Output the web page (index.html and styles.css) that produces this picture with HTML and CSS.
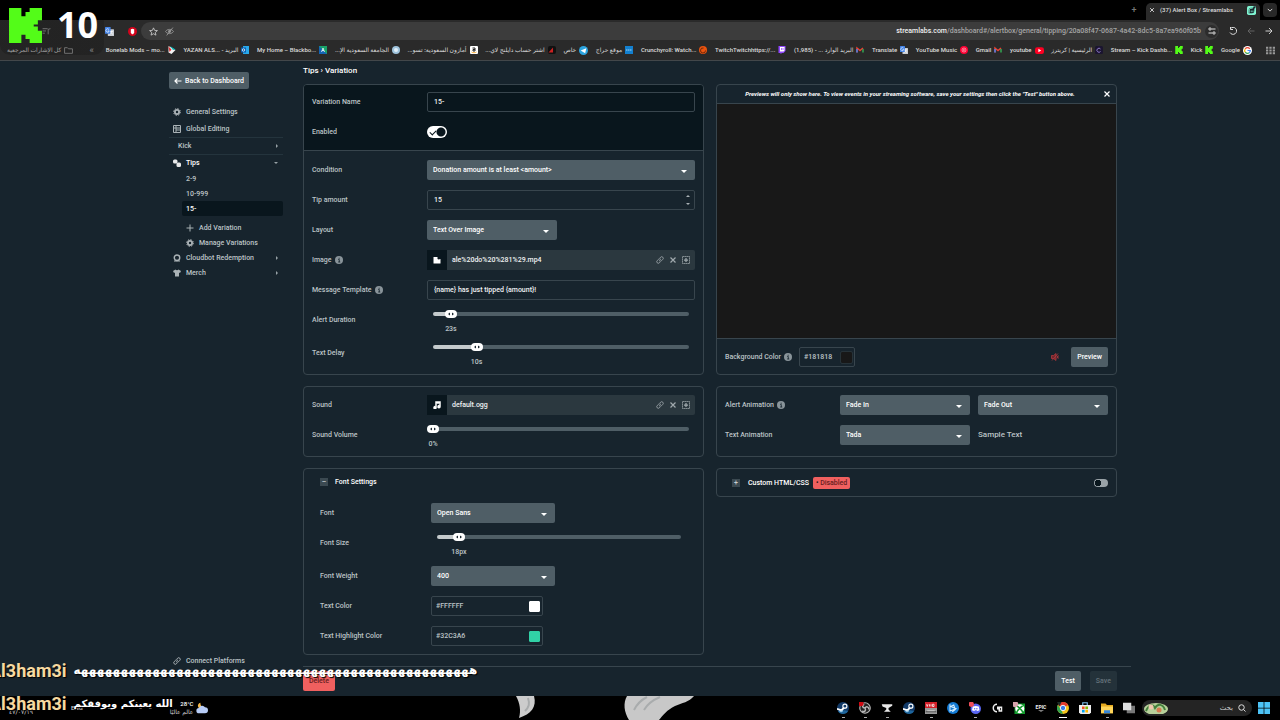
FILE: index.html
```html
<!DOCTYPE html>
<html lang="en">
<head>
<meta charset="utf-8">
<title>Alert Box / Streamlabs</title>
<link rel="stylesheet" href="styles.css">
</head>
<body>
<svg class="defs" aria-hidden="true">
  <symbol id="gear" viewBox="0 0 16 16"><circle cx="8" cy="8" r="4.2" fill="none" stroke="currentColor" stroke-width="3.6"/><circle cx="8" cy="8" r="6.8" fill="none" stroke="currentColor" stroke-width="2" stroke-dasharray="2.7 2.64"/></symbol>
  <symbol id="link" viewBox="0 0 16 16"><g fill="none" stroke="currentColor" stroke-width="1.7" stroke-linecap="round"><path d="M6.5 9.5a3 3 0 0 0 4.3 0l2.800-2.800a3 3 0 0 0-4.300-4.300L8 3.700"/><path d="M9.500 6.500a3 3 0 0 0-4.300 0L2.400 9.300a3 3 0 0 0 4.300 4.300L8 12.300"/></g></symbol>
  <symbol id="cross" viewBox="0 0 16 16"><path d="M3 3l10 10M13 3L3 13" fill="none" stroke="currentColor" stroke-width="2.4"/></symbol>
  <symbol id="media" viewBox="0 0 16 16"><rect x="1" y="1" width="14" height="14" fill="none" stroke="currentColor" stroke-width="2" stroke-dasharray="2.5 1.500"/><path d="M8 4v8M4 8h8" stroke="currentColor" stroke-width="2.500"/></symbol>
  <symbol id="info" viewBox="0 0 16 16"><circle cx="8" cy="8" r="8" fill="currentColor"/><path d="M6.500 7H8.500v5M6.500 12h4M8.300 3.500v2" stroke="#17242d" stroke-width="1.800" fill="none"/></symbol>
  <symbol id="kick" viewBox="0 0 16 17"><path fill="#53fc18" d="M0 0h6v4h2V2h2V0h6v6h-2v2h-2v1h2v2h2v6h-6v-2H8v-2H6v4H0z"/></symbol>
  <symbol id="gmail" viewBox="0 0 16 16"><path d="M2 13V4l6 5 6-5" fill="none" stroke="#ea4335" stroke-width="3"/><path d="M2 13V6" stroke="#4285f4" stroke-width="3"/><path d="M14 13V6" stroke="#34a853" stroke-width="3"/></symbol>
  <symbol id="translate" viewBox="0 0 16 16"><rect x="5" y="4" width="11" height="12" rx="1" fill="#c9cdd3"/><rect width="10" height="12" rx="1" fill="#4484e8"/><path d="M7 4.500a3 3 0 1 0 .5 2.500H5M9 8h5M11.500 7v1c0 2-1 4-3 5M10 9c1 2 2 3 4 4" fill="none" stroke="#fff" stroke-width="1.200"/></symbol>
  <symbol id="steam" viewBox="0 0 16 16"><circle cx="8" cy="8" r="8" fill="#123a68"/><path d="M0 9l6 2 4-4" stroke="#fff" stroke-width="2.400" fill="none"/><circle cx="10.500" cy="5.500" r="2.700" fill="#123a68" stroke="#fff" stroke-width="1.500"/><circle cx="5.500" cy="11.500" r="2.300" fill="#fff"/><path d="M1 12a8 8 0 0 0 14 0l-6-1z" fill="#2a8fd0" opacity=".5"/></symbol>
</svg>

<header class="browser">
  <div class="tabs">
    <button class="newtab" aria-label="New tab">+</button>
    <div class="tab"><svg class="i6"><use href="#cross"/></svg><span>(37) Alert Box / Streamlabs</span><svg class="i9" viewBox="0 0 16 16"><rect width="16" height="16" rx="3" fill="#80f5d2"/><path d="M3 13V7a4 4 0 0 1 4-4h6v6a4 4 0 0 1-4 4z" fill="#17242d"/><path d="M4 12V7a3 3 0 0 1 3-3h3" stroke="#80f5d2" stroke-width="1.500" fill="none"/><path d="M7.500 8v3M10.500 8v3" stroke="#80f5d2" stroke-width="1.500"/><circle cx="13" cy="2.500" r="2" fill="#17242d"/></svg></div>
    <button class="tabmenu" aria-label="Search tabs"><svg class="i6" viewBox="0 0 16 16"><path d="M2 5l6 6 6-6" fill="none" stroke="currentColor" stroke-width="2.500"/></svg></button>
  </div>
  <div class="toolbar">
    <svg class="i9" viewBox="0 0 16 16"><path d="M1 3h9M1 7h6M1 11h4M11 13V4l4-1" fill="none" stroke="#aaa" stroke-width="1.500"/></svg>
    <div class="ext"><svg class="i9"><use href="#translate"/></svg><svg class="i9" viewBox="0 0 16 16"><circle cx="8" cy="8" r="8" fill="#d3041c"/><path d="M5 4l3-1 3 1v6l-2 3H7L5 10z" fill="#fff"/></svg></div>
    <div class="omnibox">
      <svg class="i9" viewBox="0 0 16 16"><path d="M8 1.500l2 4.500 5 .4-3.800 3.200 1.200 4.900L8 11.900l-4.400 2.600 1.200-4.900L1 6.400 6 6z" fill="none" stroke="#ccc" stroke-width="1.500"/></svg>
      <svg class="i9" viewBox="0 0 16 16"><path d="M1 8c3-5 11-5 14 0-3 5-11 5-14 0zM3 15L14 1" fill="none" stroke="#999" stroke-width="1.600"/><circle cx="8" cy="8" r="2.500" fill="#999"/></svg>
      <span class="url"><b>streamlabs.com</b>/dashboard#/alertbox/general/tipping/20a08f47-0687-4a42-8dc5-8a7ea960f05b</span>
      <span class="tune"><svg class="i8" viewBox="0 0 16 16"><path d="M7 4h8M1 12h8" stroke="#ddd" stroke-width="2"/><circle cx="4" cy="4" r="2.300" fill="none" stroke="#ddd" stroke-width="2"/><circle cx="12" cy="12" r="2.300" fill="none" stroke="#ddd" stroke-width="2"/></svg></span>
    </div>
    <svg class="i8" viewBox="0 0 16 16"><path d="M3 3a7 7 0 1 1-1 8M3 0v5h5" fill="none" stroke="#ddd" stroke-width="2"/></svg>
    <svg class="i8" viewBox="0 0 16 16"><path d="M15 8H2M8 2L2 8l6 6" fill="none" stroke="#666" stroke-width="1.800"/></svg>
    <svg class="i8" viewBox="0 0 16 16"><path d="M1 8h13M8 2l6 6-6 6" fill="none" stroke="#ddd" stroke-width="1.800"/></svg>
  </div>
  <nav class="bookmarks" aria-label="Bookmarks">
    <a class="all" href="#"><span dir="rtl">كل الإشارات المرجعية</span><svg class="i9" viewBox="0 0 16 16"><path d="M1 13V3h5l2 2h7v8z" fill="none" stroke="#aaa" stroke-width="1.500"/></svg></a>
    <span class="more">«</span>
    <div class="marks">
    <a href="#"><span>Bonelab Mods – mo...</span><svg class="i8" viewBox="0 0 16 16"><path d="M1 0l14 8-8 8-6-3z" fill="#f2f2f2"/><path d="M4 0l11 7-5 1z" fill="#0bb"/><path d="M1 1l6 6-4 5z" fill="#d33"/></svg></a>
    <a href="#"><span>YAZAN ALS... - البريد</span><svg class="i8" viewBox="0 0 16 16"><rect x="4" width="12" height="16" fill="#28a8ea"/><rect y="3" width="10" height="10" fill="#0a5db0"/><circle cx="5" cy="8" r="2.500" fill="none" stroke="#fff" stroke-width="1.500"/></svg></a>
    <a href="#"><span>My Home – Blackbo...</span><svg class="i8" viewBox="0 0 16 16"><rect width="16" height="16" fill="#1464b4"/><path d="M16 0v16L0 0z" fill="#18a36b"/><path d="M5 12l3-8 3 8M6 9h4" fill="none" stroke="#fff" stroke-width="1.500"/></svg></a>
    <a href="#"><span dir="rtl">الجامعة السعودية الإ...</span><svg class="i8" viewBox="0 0 16 16"><circle cx="8" cy="8" r="8" fill="#9fc3dc"/><circle cx="8" cy="8" r="4" fill="#e2eff8"/></svg></a>
    <a href="#"><span dir="rtl">أمازون السعودية: تسو...</span><svg class="i8" viewBox="0 0 16 16"><rect width="16" height="16" rx="2" fill="#fff"/><path d="M5 4h5v6M10 7H6v3h4" stroke="#222" stroke-width="2" fill="none"/><path d="M3 12c3 2 7 2 10 0" stroke="#f90" stroke-width="1.500" fill="none"/></svg></a>
    <a href="#"><span dir="rtl">اشتر حساب دايلنج لاي...</span><svg class="i8" viewBox="0 0 16 16"><rect width="16" height="16" rx="4" fill="#111"/><path d="M1 13L10 3v10z" fill="#c22"/></svg></a>
    <a href="#"><span>خاص</span><svg class="i9" viewBox="0 0 16 16"><circle cx="8" cy="8" r="8" fill="#2ba4df"/><path d="M3 8l10-4-2 9-3-2z" fill="#fff"/></svg></a>
    <a href="#"><span>موقع حراج</span><svg class="i8" viewBox="0 0 16 16"><rect width="16" height="16" fill="#1380cf"/><path d="M2 8h12" stroke="#a5d3f1" stroke-width="2" stroke-dasharray="3 1"/></svg></a>
    <a href="#"><span>Crunchyroll: Watch...</span><svg class="i8" viewBox="0 0 16 16"><circle cx="8" cy="8" r="8" fill="#e9530f"/><path d="M13 9a5 5 0 1 1-4-5" fill="none" stroke="#4c1b07" stroke-width="1.500"/></svg></a>
    <a href="#"><span>TwitchTwitchhttps://...</span><svg class="i8" viewBox="0 0 16 16"><path d="M1 0h14v10l-4 4H8l-3 2v-2H1z" fill="#9146ff"/><path d="M4 2h9v7l-2 2H4z" fill="#fff"/><path d="M7 4v4M10 4v4" stroke="#9146ff" stroke-width="1.500"/></svg></a>
    <a href="#"><span dir="rtl">البريد الوارد ... - (1,985)</span><svg class="i8"><use href="#gmail"/></svg></a>
    <a href="#"><span>Translate</span><svg class="i8"><use href="#translate"/></svg></a>
    <a href="#"><span>YouTube Music</span><svg class="i8" viewBox="0 0 16 16"><circle cx="8" cy="8" r="8" fill="#f03"/><circle cx="8" cy="8" r="4" fill="none" stroke="#fff"/><path d="M7 6l3 2-3 2z" fill="#fff"/></svg></a>
    <a href="#"><span>Gmail</span><svg class="i8"><use href="#gmail"/></svg></a>
    <a href="#"><span>youtube</span><svg class="i9" viewBox="0 0 16 16"><rect y="2" width="16" height="12" rx="4" fill="#f02"/><path d="M6 5l5 3-5 3z" fill="#fff"/></svg></a>
    <a href="#"><span dir="rtl">الرئيسية | كريترز</span><svg class="i8" viewBox="0 0 16 16"><rect width="16" height="16" rx="3" fill="#1b1530"/><path d="M11 6a4 4 0 1 0 0 5" fill="none" stroke="#8d78c8" stroke-width="2"/></svg></a>
    <a href="#"><span>Stream – Kick Dashb...</span><svg class="i8"><use href="#kick"/></svg></a>
    <a href="#"><span>Kick</span><svg class="i8"><use href="#kick"/></svg></a>
    <a href="#"><span>Google</span><svg class="i9" viewBox="0 0 16 16"><circle cx="8" cy="8" r="8" fill="#fff"/><g fill="none" stroke-width="2.200"><path d="M4 5a5 5 0 0 1 8 0" stroke="#ea4335"/><path d="M4 5a5 5 0 0 0 0 6" stroke="#fbbc05"/><path d="M4 11a5 5 0 0 0 7 1" stroke="#34a853"/><path d="M8 8h5a5 5 0 0 1-2 4" stroke="#4285f4"/></g></svg></a>
    </div>
    <svg class="i9 apps" viewBox="0 0 16 16"><path d="M0 3h16M0 8h16M0 13h16" stroke="#999" stroke-width="3.600" stroke-dasharray="4 2"/></svg>
  </nav>
</header>

<div class="app">
  <aside class="side">
    <button class="btn back"><svg class="i8" viewBox="0 0 16 16"><path d="M15 8H2M7 3L2 8l5 5" fill="none" stroke="currentColor" stroke-width="2.400"/></svg>Back to Dashboard</button>
    <nav class="menu">
      <a href="#"><svg class="i8"><use href="#gear"/></svg>General Settings</a>
      <a href="#"><svg class="i8" viewBox="0 0 16 16"><path d="M1 1h14v14H1zM1 6h14M6 1v14M6 10h9" fill="none" stroke="currentColor" stroke-width="2"/></svg>Global Editing</a>
      <a class="group" href="#">Kick<i class="right"></i></a>
      <a class="tips on" href="#"><svg class="i8" viewBox="0 0 16 16"><rect x="0" y="1" width="9" height="8" rx="3" fill="currentColor"/><rect x="7" y="7" width="9" height="9" rx="3" fill="currentColor"/></svg>Tips<i class="down"></i></a>
      <a class="sub" href="#">2-9</a>
      <a class="sub" href="#">10-999</a>
      <a class="sub on current" href="#">15-</a>
      <a class="act" href="#"><svg class="i8" viewBox="0 0 16 16"><path d="M8 1v14M1 8h14" stroke="currentColor" stroke-width="2"/></svg>Add Variation</a>
      <a class="act" href="#"><svg class="i8"><use href="#gear"/></svg>Manage Variations</a>
      <a class="short" href="#"><svg class="i8" viewBox="0 0 16 16"><circle cx="8" cy="7.500" r="5.500" fill="none" stroke="currentColor" stroke-width="2.800"/><path d="M2 14h12" stroke="currentColor" stroke-width="2"/></svg>Cloudbot Redemption<i class="right"></i></a>
      <a class="short" href="#"><svg class="i8" viewBox="0 0 16 16"><path d="M5 1c1 2 5 2 6 0l5 3-2 4-2-1v8H4V7L2 8 0 4z" fill="currentColor"/></svg>Merch<i class="right"></i></a>
    </nav>
    <a class="connect" href="#"><svg class="i8"><use href="#link"/></svg>Connect Platforms</a>
  </aside>

  <main class="content">
    <h1>Tips › Variation</h1>
    <div class="cols">
      <div class="col">
        <section class="panel">
          <div class="dark">
            <div class="row"><label for="vname">Variation Name</label><input id="vname" type="text" value="15-"></div>
            <div class="row"><label for="enabled">Enabled</label><input id="enabled" class="switch" type="checkbox" checked></div>
          </div>
          <div class="rows main">
            <div class="row"><label for="cond">Condition</label><span class="select"><select id="cond"><option>Donation amount is at least &lt;amount&gt;</option></select></span></div>
            <div class="row"><label for="tip">Tip amount</label><span class="stepper"><input id="tip" type="text" inputmode="numeric" value="15"><i class="up"></i><i class="down"></i></span></div>
            <div class="row"><label for="layout">Layout</label><span class="select mid"><select id="layout"><option>Text Over Image</option></select></span></div>
            <div class="row"><span class="label">Image<svg class="i8"><use href="#info"/></svg></span><div class="media"><span class="kind"><svg class="i8" viewBox="0 0 16 16"><path d="M1 2h8v4l2 1 4-1v9H1z" fill="currentColor"/></svg></span><span class="file">ale%20do%20%281%29.mp4</span><button aria-label="Link"><svg class="i8"><use href="#link"/></svg></button><button aria-label="Remove"><svg class="i8"><use href="#cross"/></svg></button><button aria-label="Gallery"><svg class="i8"><use href="#media"/></svg></button></div></div>
            <div class="row"><label for="msg">Message Template<svg class="i8"><use href="#info"/></svg></label><input id="msg" type="text" value="{name} has just tipped {amount}!"></div>
            <div class="row tall"><label for="dur">Alert Duration</label><div class="slider" style="--v:7"><input id="dur" type="range" value="7"><output>23s</output></div></div>
            <div class="row tall"><label for="delay">Text Delay</label><div class="slider" style="--v:17"><input id="delay" type="range" value="17"><output>10s</output></div></div>
          </div>
        </section>
        <section class="panel">
          <div class="rows">
            <div class="row"><span class="label">Sound</span><div class="media"><span class="kind"><svg class="i8" viewBox="0 0 16 16"><path d="M5 1h10v10a3 3 0 1 1-2-2.500V5H7v8a3 3 0 1 1-2-2.500z" fill="currentColor" stroke="currentColor"/></svg></span><span class="file">default.ogg</span><button aria-label="Link"><svg class="i8"><use href="#link"/></svg></button><button aria-label="Remove"><svg class="i8"><use href="#cross"/></svg></button><button aria-label="Gallery"><svg class="i8"><use href="#media"/></svg></button></div></div>
            <div class="row tall"><label for="vol">Sound Volume</label><div class="slider" style="--v:0"><input id="vol" type="range" value="0"><output>0%</output></div></div>
          </div>
        </section>
        <section class="panel font">
          <h2><button class="fold" aria-label="Collapse">–</button>Font Settings</h2>
          <div class="row"><label for="ff">Font</label><span class="select narrow"><select id="ff"><option>Open Sans</option></select></span></div>
          <div class="row tall"><label for="fs">Font Size</label><div class="slider" style="--v:9"><input id="fs" type="range" value="9"><output>18px</output></div></div>
          <div class="row"><label for="fw">Font Weight</label><span class="select narrow"><select id="fw"><option>400</option></select></span></div>
          <div class="row"><label for="tc">Text Color</label><span class="color"><input id="tc" type="text" value="#FFFFFF"><input type="color" value="#ffffff" aria-label="Pick text color"></span></div>
          <div class="row"><label for="hc">Text Highlight Color</label><span class="color"><input id="hc" type="text" value="#32C3A6"><input type="color" value="#31d1a6" aria-label="Pick highlight color"></span></div>
        </section>
      </div>
      <div class="col">
        <section class="panel">
          <div class="notice"><em>Previews will only show here. To view events in your streaming software, save your settings then click the "Test" button above.</em><button aria-label="Close"><svg class="i8"><use href="#cross"/></svg></button></div>
          <div class="preview"></div>
          <div class="bgrow"><label for="bg">Background Color<svg class="i8"><use href="#info"/></svg></label><span class="color small"><input id="bg" type="text" value="#181818"><input type="color" value="#181818" aria-label="Pick background color"></span><svg class="i8 mute" viewBox="0 0 16 16"><path d="M1 5h4l5-4v14l-5-4H1zM12 5l3 6M15 5l-3 6M2 15L14 1" fill="#71282d" stroke="#b8393f" stroke-width="1.500"/></svg><button class="btn">Preview</button></div>
        </section>
        <section class="panel">
          <div class="rows anim">
            <label for="ain">Alert Animation<svg class="i8"><use href="#info"/></svg></label><span class="select"><select id="ain"><option>Fade In</option></select></span><span class="select"><select aria-label="Alert exit animation"><option>Fade Out</option></select></span>
            <label for="ta">Text Animation</label><span class="select"><select id="ta"><option>Tada</option></select></span><span class="sample">Sample Text</span>
          </div>
        </section>
        <section class="panel custom">
          <button class="fold" aria-label="Expand">+</button><label for="css">Custom HTML/CSS</label><span class="tag">Disabled</span><input id="css" class="switch off" type="checkbox">
        </section>
      </div>
    </div>
    <footer class="actions"><button class="btn danger">Delete</button><button class="btn">Test</button><button class="btn dim" disabled>Save</button></footer>
  </main>
</div>

<footer class="taskbar">
  <span class="date">٤٧/٠٧/١٩</span><span class="lang">ENG</span>
  <span class="weather"><span><b>28°C</b><span dir="rtl">عالم عاليًا</span></span><svg viewBox="0 0 16 16"><path d="M6 1a4 4 0 1 0 4 6 5 5 0 0 1-4-6z" fill="#f7b947"/><path d="M4 15a3.500 3.500 0 0 1 0-7 4.500 4.500 0 0 1 8-1 4 4 0 0 1 0 8z" fill="#b8cdf7"/></svg></span>
  <div class="tasks">
    <span class="run"><svg><use href="#steam"/></svg></span>
    <span class="run"><svg viewBox="0 0 16 16"><circle cx="8" cy="8" r="7" fill="#222" stroke="#bbb" stroke-width="1.500"/><path d="M8 8c-4 0-4-4-1-5M8 8c2-3 6-1 5 2M8 8c2 4-1 6-4 4" stroke="#bbb" stroke-width="2" fill="none"/><circle cx="2.500" cy="2" r="3.600" fill="#d00a12"/></svg></span>
    <span class="run"><svg viewBox="0 0 16 16"><path d="M1 3h14v2l-5 3v2l3 3H4l3-3V8L2 6z" fill="#e8e8e8"/></svg></span>
    <span><svg><use href="#steam"/></svg></span>
    <span class="run"><svg viewBox="0 0 16 16"><path fill="#d32029" d="M0 0h16v8H0z"/><path fill="#999" d="M0 8h16v8H0z"/><path d="M2 3l1 3 1-3M6 3v3M8 3v3M10 3h2v3h-2zM3 12h10" stroke="#fff" fill="none"/><path d="M1 13h14" stroke="#333"/></svg></span>
    <span><svg viewBox="0 0 16 16"><circle cx="8" cy="8" r="8" fill="#147bd4"/><path d="M4 3v9l8-3-7-3 4-2 2 6-4 3" fill="none" stroke="#d6eeff" stroke-width="1.400"/></svg></span>
    <span class="run"><svg viewBox="0 0 16 16"><circle cx="9" cy="9" r="7" fill="#5865f2"/><path d="M5 6c3-1 5-1 8 0l1 5-3 1-1-1H8l-1 1-3-1z" fill="#fff"/><circle cx="7.500" cy="9" r="1" fill="#5865f2"/><circle cx="10.500" cy="9" r="1" fill="#5865f2"/><circle cx="3" cy="3" r="3.500" fill="#ef4e5a"/></svg></span>
    <span><svg viewBox="0 0 16 16"><path d="M8 3a5 5 0 1 0 0 10M9 7h5v5h-3V9H9z" stroke="#eee" stroke-width="2" fill="none"/></svg></span>
    <span><svg viewBox="0 0 16 16"><rect x="2" y="2" width="14" height="14" fill="#129a2c"/><circle cx="9" cy="9" r="6" fill="#fff"/><path d="M5 14c1-4 7-8 8-9M13 14c-1-4-7-8-8-9" stroke="#129a2c" stroke-width="2" fill="none"/><circle cx="3" cy="3" r="4" fill="#d7a3ac"/></svg></span>
    <span class="epic">EPIC<svg viewBox="0 0 8 2"><path d="M0 0h8L4 2z" fill="#aaa"/></svg></span>
    <span class="run active"><svg viewBox="0 0 16 16"><circle cx="8" cy="8" r="8" fill="#f3c41c"/><path d="M8 8L1 4a8 8 0 0 1 14 0z" fill="#e23b2e"/><path d="M8 16A8 8 0 0 1 1 4l5 7z" fill="#30a350"/><circle cx="8" cy="8" r="3.600" fill="#3b7de8" stroke="#fff" stroke-width="1.200"/><path d="M0 0h6L3 6z" fill="#1c2b26"/></svg></span>
    <span><svg viewBox="0 0 16 16"><path d="M5 4V1h6v3" fill="none" stroke="#7cc0ee" stroke-width="1.500"/><path d="M0 4h16v10l-2 2H2l-2-2z" fill="#eee"/><path d="M4 6h3.500v3.500H4z" fill="#f25022"/><path d="M8.500 6H12v3.500H8.500z" fill="#7fba00"/><path d="M4 10.500h3.500V14H4z" fill="#00a4ef"/><path d="M8.500 10.500H12V14H8.500z" fill="#ffb900"/></svg></span>
    <span class="run"><svg viewBox="0 0 16 16"><path d="M0 2h6l2 2h8v11H0z" fill="#e5a91f"/><path d="M0 6h16v9H0z" fill="#ffd55a"/><path d="M4 11h8v4H4z" fill="#3686d9"/></svg></span>
    <span><svg viewBox="0 0 16 16"><rect x="5" y="5" width="11" height="10" fill="#777"/><rect x="0" y="1" width="11" height="10" fill="#ddd"/></svg></span>
  </div>
  <div class="search"><svg class="art" viewBox="0 0 24 12"><ellipse cx="12" cy="7" rx="12" ry="6" fill="#b7d09a"/><path d="M2 9c3-7 7-7 9-3 3-5 8-4 10 2" fill="none" stroke="#43803b" stroke-width="2"/><circle cx="7" cy="5" r="2.500" fill="#efc8ad"/><circle cx="15" cy="8" r="2.500" fill="#d57c52"/></svg><label for="find" dir="rtl">بحث</label><input id="find" type="text"><svg class="i8" viewBox="0 0 16 16"><circle cx="7" cy="7" r="5.500" fill="none" stroke="#ddd" stroke-width="2"/><path d="M11 11l4 4" stroke="#ddd" stroke-width="2"/></svg></div>
  <svg class="win" viewBox="0 0 16 16"><path d="M0 0h7.500v7.500H0zM8.500 0H16v7.500H8.500zM0 8.500h7.500V16H0zM8.500 8.500H16V16H8.500z" fill="#4cc2f5"/></svg>
</footer>

<svg class="feathers" viewBox="0 0 180 24" aria-hidden="true"><path d="M0 0h18c3 11-3 18-15 22 2-7 1-15-3-22z" fill="#ccc"/><path d="M111 0h67c-5 6-12 7-19 10-8 4-12 9-16 14h-30c-5-8-6-17-2-24z" fill="#c8c8c8"/><path d="M118 14c3-6 7-10 13-13M128 14c4-7 9-10 16-13M12 2c2 6 1 9-3 13" stroke="#a9acad" stroke-width="2" fill="none"/></svg>

<div class="counter"><svg><use href="#kick"/></svg><span>10</span></div>
<div class="chat">
  <p><b>Al3ham3i</b><span dir="rtl">ههههههههههههههههههههههههههههههههههههههههههههههههههه</span></p>
  <p><b>Al3ham3i</b><span class="brief" dir="rtl">الله يعينكم ويوفقكم</span></p>
</div>
</body>
</html>
```
FILE: styles.css
```css
* { box-sizing: border-box; }
body {
  margin: 0;
  min-height: 100vh;
  display: flex;
  flex-direction: column;
  position: relative;
  overflow: hidden;
  background: #17242d;
  color: #bcc3c6;
  font: 500 7px/10px Roboto, "DejaVu Sans", sans-serif;
}
a { color: inherit; text-decoration: none; }
button, input, select { font: inherit; color: inherit; margin: 0; padding: 0; border: 0; background: none; }
button { display: flex; align-items: center; justify-content: center; }
svg { flex: none; display: block; }
.defs { position: absolute; width: 0; height: 0; }
.i6 { width: 6px; height: 6px; }
.i8 { width: 8px; height: 8px; }
.i9 { width: 9px; height: 9px; }

/* browser chrome */
.browser { background: #2a2a2a; border-bottom: 1px solid #43474a; color: #dcdcdc; }
.tabs { height: 20px; background: #000; display: flex; justify-content: flex-end; align-items: flex-end; padding-right: 3px; }
.newtab { width: 24px; height: 20px; color: #777; font-size: 9px; }
.tab { width: 114px; height: 17px; background: #2a2a2a; border-radius: 5px 5px 0 0; display: flex; align-items: center; gap: 5px; padding: 0 4px 3px 3px; }
.tab span { flex: 1; white-space: nowrap; font-size: 6px; }
.tabmenu { width: 14px; height: 14px; margin: 0 0 3px 3px; border-radius: 4px; background: #282828; }
.toolbar { height: 20px; display: flex; align-items: center; gap: 10px; padding: 2px 7px 0 42px; }
.ext { display: flex; gap: 14px; margin-left: 44px; }
.omnibox { flex: 1; display: flex; align-items: center; gap: 7px; height: 18px; padding: 0 1px 0 8px; background: #3c3c3c; border-radius: 9px; margin-left: -6px; }
.url { flex: 1; text-align: right; color: #a5a5a5; white-space: nowrap; }
.url b { color: #f0f0f0; font-weight: 500; }
.tune { width: 13px; height: 13px; border-radius: 7px; background: #2c2c2c; display: flex; align-items: center; justify-content: center; margin-left: -3px; }
.bookmarks { height: 20px; display: flex; align-items: center; font-size: 6px; padding: 0 5px 0 7px; white-space: nowrap; }
.bookmarks a { display: flex; align-items: center; gap: 3px; }
.more { margin: 0 12px 0 16px; font-size: 9px; color: #aaa; }
.marks { flex: 1; display: flex; justify-content: space-between; }
.apps { margin-left: 14px; }

/* application frame */
.app { flex: 1; display: grid; grid-template-columns: 114px minmax(0, 1fr); gap: 20px; padding: 0 149px 0 169px; }
.side { display: flex; flex-direction: column; padding: 11px 0 30px; }
.btn { height: 20px; padding: 0 6px; border-radius: 2px; background: #4f5e66; color: #fff; }
.back { align-self: flex-start; height: 17px; gap: 3px; padding: 0 5px; }
.menu { display: flex; flex-direction: column; margin-top: 14px; }
.menu a { display: flex; align-items: center; gap: 5px; height: 17px; padding-left: 4px; }
.menu i { margin-left: auto; margin-right: 5px; }
.menu .group { height: 18px; padding-left: 9px; border: solid #24343d; border-width: 1px 0; }
.menu .on { color: #fff; }
.menu .tips { height: 16px; }
.menu .sub { height: 15px; margin-left: 13px; }
.menu .current { background: #09161d; margin-bottom: 4px; border-radius: 2px; }
.menu .act { height: 15px; padding-left: 17px; }
.menu .short { height: 15px; }
.menu svg { opacity: 0.9; }
.connect { display: flex; align-items: center; gap: 5px; padding-left: 4px; margin-top: auto; }
i.right { border: solid transparent; border-width: 2px 0 2px 2px; border-left-color: #97a1a6; }
i.down { width: 4px; border: solid transparent; border-width: 2px 2px 0; border-top-color: #97a1a6; }

/* content */
.content { display: flex; flex-direction: column; }
h1, h2 { margin: 0; font-size: 8px; font-weight: 500; color: #fff; }
h1 { line-height: 20px; margin-bottom: 3px; }
.cols { display: grid; grid-template-columns: 1fr 1fr; gap: 12px; padding-right: 14px; }
.col { display: flex; flex-direction: column; gap: 11px; min-width: 0; }
.panel { border: 1px solid #38454d; border-radius: 4px; }
.dark { background: #09161d; border-bottom: 1px solid #38454d; padding: 2px 8px 3px; border-radius: 3px 3px 0 0; }
.rows { padding: 3px 8px; }
.main { padding-top: 4px; }
.row { display: grid; grid-template-columns: 115px minmax(0, 1fr); height: 30px; align-items: center; }
.row.tall { height: 33px; align-items: start; }
.row.tall label { line-height: 30px; }
label, .label { display: flex; align-items: center; gap: 3px; color: #bcc3c6; white-space: nowrap; }
label .i8, .label .i8 { color: #89949a; }
input[type=text] { width: 100%; height: 20px; padding: 0 6px; border: 1px solid #38454d; border-radius: 2px; color: #f0f2f3; }
.select { position: relative; display: block; }
.select::after { content: ""; position: absolute; right: 8px; top: 10px; border: solid transparent; border-width: 3px 3px 0; border-top-color: #fff; }
.select select { appearance: none; display: block; width: 100%; height: 20px; padding: 0 6px 1px; border-radius: 2px; background: #4f5e66; color: #fff; }
.mid { width: 130px; }
.narrow { width: 124px; }
.stepper { position: relative; }
.stepper i { position: absolute; right: 5px; width: 4px; border: solid transparent; border-width: 2px 2px 0; border-top-color: #a9b1b5; }
.stepper i.up { top: 5px; border-width: 0 2px 2px; border-bottom-color: #a9b1b5; }
.stepper i.down { bottom: 5px; }
.media { display: flex; align-items: center; gap: 5px; height: 20px; padding-right: 5px; background: #2b383f; border-radius: 2px; color: #a0a9ad; }
.kind { width: 20px; height: 20px; display: flex; align-items: center; justify-content: center; background: #09161d; color: #fff; }
.file { flex: 1; color: #f0f2f3; }

/* sliders */
.slider { position: relative; }
.slider::before { content: ""; position: absolute; left: 6px; right: 6px; top: 7px; height: 4px; border-radius: 2px; background: linear-gradient(#c4cacc, #c4cacc) no-repeat 0 0 / calc(var(--v) * 1%) 100% #4f5e66; }
.slider input { appearance: none; position: relative; display: block; width: 100%; height: 18px; }
.slider input::-webkit-slider-thumb { appearance: none; width: 12px; height: 8px; border-radius: 4px; background: url("data:image/svg+xml,%3Csvg xmlns='http://www.w3.org/2000/svg' viewBox='0 0 12 8'%3E%3Cpath d='M5 2.500v3L3 4zM7 2.500v3L9 4z' fill='%2317242d'/%3E%3C/svg%3E") center / 12px 8px #fff; }
.slider output { display: block; width: 24px; padding-top: 1px; text-align: center; margin-left: calc((100% - 12px) * var(--v) / 100 - 6px); }

/* switches */
.switch { appearance: none; width: 20px; height: 12px; border-radius: 6px; background: radial-gradient(circle at 14px 6px, #09161d 4px, transparent 5px), #fff; position: relative; }
.switch:checked::after { content: ""; position: absolute; left: 3px; top: 4px; width: 5px; height: 3px; border: solid #09161d; border-width: 0 0 1px 1px; transform: rotate(-45deg); }
.switch.off { width: 14px; height: 8px; border-radius: 4px; background: radial-gradient(circle at 4px 4px, #09161d 3px, transparent 3px), #99a2a7; margin-left: auto; }

/* font panel */
.font { padding: 0 16px 3px; }
.font h2 { display: flex; align-items: center; gap: 7px; height: 29px; padding-bottom: 3px; font-size: 7px; }
.font .row { grid-template-columns: 111px minmax(0, 1fr); }
.fold { width: 8px; height: 8px; background: #3b4951; color: #c8ced1; line-height: 8px; }
.color { position: relative; width: 112px; }
.color input[type=text] { padding: 0 4px; color: #bcc3c6; }
.color input[type=color] { position: absolute; right: 3px; top: 5px; width: 11px; height: 11px; border-radius: 1px; }
input[type=color]::-webkit-color-swatch-wrapper { padding: 0; }
input[type=color]::-webkit-color-swatch { border: 0; border-radius: 1px; }

/* right column */
.notice { height: 19px; display: flex; align-items: center; padding-right: 5px; color: #fff; font-size: 6px; font-weight: 700; border-bottom: 1px solid #38454d; }
.notice em { flex: 1; text-align: center; }
.preview { height: 235px; background: #181818; border-bottom: 1px solid #38454d; }
.bgrow { display: flex; align-items: center; height: 35px; padding: 0 8px; }
.small { width: 56px; margin-left: 7px; }
.small input[type=color] { outline: 1px solid #263238; }
.mute { margin-left: auto; margin-right: 12px; }
.anim { display: grid; grid-template-columns: 107px 1fr 1fr; column-gap: 8px; grid-auto-rows: 30px; align-items: center; padding-bottom: 6px; }
.sample { font-size: 8px; }
.custom { display: flex; align-items: center; height: 29px; padding: 0 8px 0 15px; }
.custom label { color: #fff; margin: 0 4px 0 8px; }
.tag { padding: 0 3px; line-height: 12px; border-radius: 2px; background: #f0605f; color: #651d20; }
.tag::before { content: "• "; color: #2b1013; }

.actions { display: flex; align-items: flex-start; gap: 9px; margin-top: 11px; padding: 4px 14px 4px 0; border-top: 1px solid #38454d; }
.danger { margin-right: auto; background: #f0605f; color: #651d20; }
.dim { background: #24323a; color: #65727a; }

/* taskbar */
.taskbar { height: 24px; display: flex; align-items: center; background: #000; color: #ccc; padding: 0 10px 0 9px; font-size: 6px; }
.date { align-self: flex-end; line-height: 16px; }
.lang { margin: 0 87px 0 38px; }
.weather { display: flex; align-items: center; gap: 3px; margin-right: auto; }
.weather > span { display: flex; flex-direction: column; align-items: flex-end; line-height: 8px; }
.weather b { color: #fff; font-weight: 500; }
.weather svg { width: 12px; height: 12px; }
.tasks { display: flex; }
.tasks > span { width: 22px; height: 24px; display: flex; flex-direction: column; align-items: center; justify-content: center; position: relative; }
.tasks svg { width: 12px; height: 12px; }
.tasks .run::after { content: ""; position: absolute; bottom: 2px; width: 3px; height: 1px; background: #aaa; }
.tasks .active::after { width: 8px; background: #fff; }
.tasks .epic { font: 700 5px/6px Roboto, sans-serif; color: #eee; }
.tasks .epic svg { width: 6px; height: 2px; }
.search { display: flex; align-items: center; width: 110px; height: 16px; margin: 0 6px 0 2px; padding: 0 6px 0 2px; background: #242424; border-radius: 8px; }
.search .art { width: 24px; height: 12px; }
.search label { margin: 0 5px 0 auto; font-size: 7px; color: #ccc; order: 1; }
.search .i8 { order: 2; }
.search input { flex: 1; min-width: 0; width: 20px; height: 14px; border: 0; }
.win { width: 12px; height: 12px; }

/* stream overlays */
.feathers { position: absolute; left: 516px; bottom: 0; width: 180px; height: 24px; }
.counter { position: absolute; left: 0; top: 0; width: 104px; height: 55px; padding: 8px 0 0 9px; display: flex; gap: 15px; background: linear-gradient(transparent 20px, #1414144d 20px); border-radius: 10px; color: #fff; font: 700 36px/34px "Noto Sans", sans-serif; }
.counter svg { width: 33px; height: 35px; }
.chat { position: absolute; left: -11px; bottom: 0; }
.chat p { display: flex; align-items: center; gap: 7px; height: 33px; margin: 0; white-space: nowrap; color: #fff; font: 700 12px/33px "DejaVu Sans", sans-serif; text-shadow: 1px 1px 1px #000; }
.chat b { font: 700 18px/33px Roboto, sans-serif; color: #f6d9a0; }
.chat .brief { font-size: 10px; }
```
